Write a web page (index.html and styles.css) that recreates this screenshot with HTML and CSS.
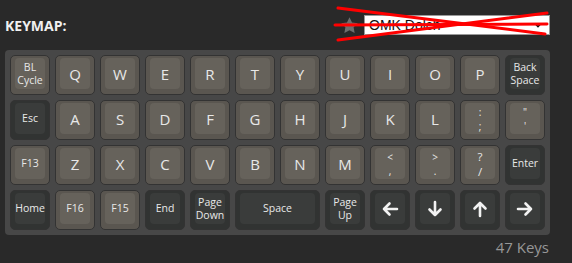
FILE: index.html
```html
<!DOCTYPE html>
<html lang="en">
<head>
    <meta charset="UTF-8">
    <title>Keymap</title>
    <link rel="stylesheet" href="styles.css">
</head>
<body>

    <!-- Header: title + keymap picker -->
    <div class="header">
        <span class="title">KEYMAP:</span>
        <div class="picker">
            <svg class="star" viewBox="0 0 24 24"><path d="M12 1.5l3.2 6.6 7.3 1-5.3 5.1 1.3 7.2L12 18l-6.5 3.4 1.3-7.2-5.3-5.1 7.3-1z"/></svg>
            <div class="select">
                <span>OMK Dolch</span>
                <svg class="caret" viewBox="0 0 8 6"><polyline points="1,1.5 4,4.5 7,1.5"/></svg>
            </div>
            <!-- crossed-out marker drawn over the picker -->
            <svg class="strike" viewBox="0 0 220 40">
                <line x1="8" y1="3" x2="215" y2="29"/>
                <line x1="8" y1="35" x2="217" y2="8"/>
                <line x1="5" y1="20" x2="217" y2="19"/>
            </svg>
        </div>
    </div>

    <!-- Keyboard -->
    <div class="board">
        <!-- row 1 -->
        <div class="key"><div class="cap small">BL<br>Cycle</div></div>
        <div class="key"><div class="cap">Q</div></div>
        <div class="key"><div class="cap">W</div></div>
        <div class="key"><div class="cap">E</div></div>
        <div class="key"><div class="cap">R</div></div>
        <div class="key"><div class="cap">T</div></div>
        <div class="key"><div class="cap">Y</div></div>
        <div class="key"><div class="cap">U</div></div>
        <div class="key"><div class="cap">I</div></div>
        <div class="key"><div class="cap">O</div></div>
        <div class="key"><div class="cap">P</div></div>
        <div class="key dark"><div class="cap small">Back<br>Space</div></div>

        <!-- row 2 -->
        <div class="key dark"><div class="cap small">Esc</div></div>
        <div class="key"><div class="cap">A</div></div>
        <div class="key"><div class="cap">S</div></div>
        <div class="key"><div class="cap">D</div></div>
        <div class="key"><div class="cap">F</div></div>
        <div class="key"><div class="cap">G</div></div>
        <div class="key"><div class="cap">H</div></div>
        <div class="key"><div class="cap">J</div></div>
        <div class="key"><div class="cap">K</div></div>
        <div class="key"><div class="cap">L</div></div>
        <div class="key"><div class="cap pair">:<br>;</div></div>
        <div class="key"><div class="cap pair">"<br>'</div></div>

        <!-- row 3 -->
        <div class="key"><div class="cap small">F13</div></div>
        <div class="key"><div class="cap">Z</div></div>
        <div class="key"><div class="cap">X</div></div>
        <div class="key"><div class="cap">C</div></div>
        <div class="key"><div class="cap">V</div></div>
        <div class="key"><div class="cap">B</div></div>
        <div class="key"><div class="cap">N</div></div>
        <div class="key"><div class="cap">M</div></div>
        <div class="key"><div class="cap pair">&lt;<br>,</div></div>
        <div class="key"><div class="cap pair">&gt;<br>.</div></div>
        <div class="key"><div class="cap pair big">?<br>/</div></div>
        <div class="key dark"><div class="cap small">Enter</div></div>

        <!-- row 4 -->
        <div class="key dark"><div class="cap small">Home</div></div>
        <div class="key"><div class="cap small">F16</div></div>
        <div class="key"><div class="cap small">F15</div></div>
        <div class="key dark"><div class="cap small">End</div></div>
        <div class="key dark"><div class="cap small">Page<br>Down</div></div>
        <div class="key dark wide"><div class="cap small">Space</div></div>
        <div class="key dark"><div class="cap small">Page<br>Up</div></div>
        <div class="key dark"><div class="cap"><svg class="arrow" viewBox="0 0 18 18"><path d="M16 9H3M8.5 3.5L3 9l5.5 5.5"/></svg></div></div>
        <div class="key dark"><div class="cap"><svg class="arrow" viewBox="0 0 18 18"><path d="M9 2v13M3.5 9.5L9 15l5.5-5.5"/></svg></div></div>
        <div class="key dark"><div class="cap"><svg class="arrow" viewBox="0 0 18 18"><path d="M9 16V3M3.5 8.5L9 3l5.5 5.5"/></svg></div></div>
        <div class="key dark"><div class="cap"><svg class="arrow" viewBox="0 0 18 18"><path d="M2 9h13M9.5 3.5L15 9l-5.5 5.5"/></svg></div></div>
    </div>

    <div class="count">47 Keys</div>

</body>
</html>
```

FILE: styles.css
```css
/* Page */
body {
    margin: 0;
    background: #292929;
    font-family: "Open Sans", "Liberation Sans", sans-serif;
    color: #e6e6e6;
}

/* Header row */
.header {
    height: 50px;
    display: flex;
    align-items: center;
    justify-content: space-between;
    padding: 0 22px 0 5px;
}

.title {
    font-size: 14px;
    font-weight: bold;
    color: #f0f0f0;
}

.picker {
    position: relative;
    display: flex;
    align-items: center;
    gap: 5px;
}

.star {
    width: 19px;
    height: 19px;
    fill: #6e6e6e;
}

.select {
    width: 180px;
    height: 18px;
    background: #fff;
    border: 1px solid #999;
    display: flex;
    align-items: center;
    justify-content: space-between;
    padding: 0 0 0 4px;
    font-family: "Liberation Sans", Arial, sans-serif;
    font-size: 14px;
    color: #111;
}

.caret {
    width: 8px;
    height: 6px;
    margin-right: 7px;
    fill: none;
    stroke: #111;
    stroke-width: 1.6;
}

/* red cross over the picker */
.strike {
    position: absolute;
    left: -10px;
    top: -10px;
    width: 220px;
    height: 40px;
    stroke: #ff0000;
    stroke-width: 3;
    stroke-linecap: round;
    pointer-events: none;
}

/* Keyboard panel */
.board {
    margin-left: 5px;
    width: fit-content;
    padding: 5px;
    background: #474747;
    border-radius: 4px;
    display: grid;
    grid-template-columns: repeat(12, 40px);
    grid-auto-rows: 40px;
    gap: 5px;
}

.key {
    box-sizing: border-box;
    border: 1px solid #333;
    border-radius: 5px;
    background: #5a5650;
    display: flex;
}

.key.dark {
    background: #313332;
}

.key.wide {
    grid-column: span 2;
}

.cap {
    flex: 1;
    margin: 2px 4px 5px;
    border-radius: 4px;
    background: #66625b;
    display: flex;
    align-items: center;
    justify-content: center;
    text-align: center;
    font-size: 15px;
    color: #e8e8e8;
}

.key.dark .cap {
    background: #3a3c3b;
}

.cap.small {
    font-size: 10.5px;
    line-height: 13px;
}

.cap.pair {
    font-size: 10px;
    line-height: 14px;
}

.cap.big {
    font-size: 11.5px;
    line-height: 15px;
}

.arrow {
    width: 18px;
    height: 18px;
    fill: none;
    stroke: #f2f2f2;
    stroke-width: 2.6;
    stroke-linecap: round;
    stroke-linejoin: round;
}

/* Footer */
.count {
    margin-top: 2px;
    padding-right: 23px;
    text-align: right;
    font-size: 15px;
    line-height: 20px;
    color: #979797;
}
```
